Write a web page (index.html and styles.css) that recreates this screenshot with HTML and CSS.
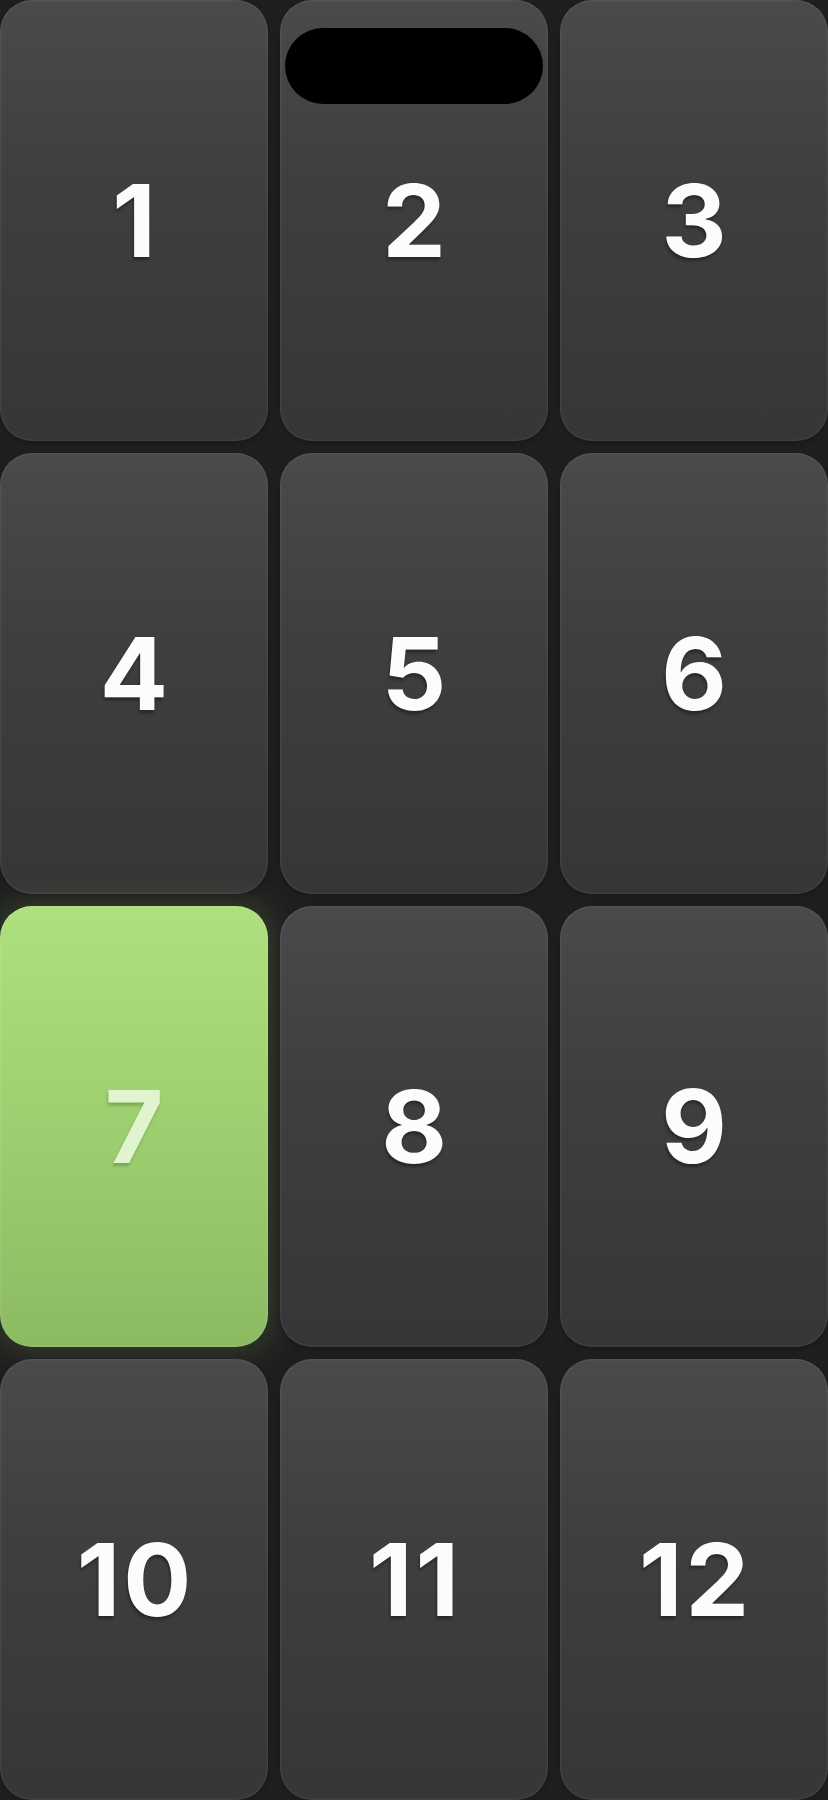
FILE: index.html
```html
<!DOCTYPE html>
<html lang="en">
<head>
  <meta charset="UTF-8" />
  <title>Number Grid</title>
  <link rel="stylesheet" href="styles.css">
</head>
<body>
  <!-- top island -->
  <div class="island"></div>

  <!-- 숫자 타일 -->
  <div class="grid">
    <div class="tile"><span>1</span></div>
    <div class="tile"><span>2</span></div>
    <div class="tile"><span>3</span></div>
    <div class="tile"><span>4</span></div>
    <div class="tile"><span>5</span></div>
    <div class="tile"><span>6</span></div>
    <div class="tile active"><span>7</span></div>
    <div class="tile"><span>8</span></div>
    <div class="tile"><span>9</span></div>
    <div class="tile"><span>10</span></div>
    <div class="tile"><span>11</span></div>
    <div class="tile"><span>12</span></div>
  </div>
</body>
</html>
```

FILE: styles.css
```css
html, body {
  margin: 0;
  padding: 0;
}

body {
  background-color: #1f1e21;
  width: 828px;
  height: 1800px;
  overflow: hidden;
  font-family: Inter, 'Liberation Sans', Arial, sans-serif;
  position: relative;
}

/* 타일 그리드 */
.grid {
  display: grid;
  grid-template-columns: repeat(3, 268px);
  grid-template-rows: repeat(4, 441px);
  gap: 12px;
}

.tile {
  display: flex;
  justify-content: center;
  align-items: center;
  border-radius: 32px;
  background: linear-gradient(to bottom, #4a494c 0%, #3f3e41 40%, #363538 100%);
  box-shadow: inset 0 0 0 1.5px rgba(255,255,255,0.05), 0 2px 6px rgba(0,0,0,0.25);
}

.tile span {
  color: #fcfcfc;
  font-size: 101px;
  font-weight: 700;
  letter-spacing: 3px;
  padding-left: 3px; /* 글자 간격 보정 */
  line-height: 1;
  text-shadow: -1px 3px 3px rgba(0,0,0,0.35);
}

/* 선택된 타일 */
.tile.active {
  background: linear-gradient(to bottom, #afe07f 0%, #9fd171 45%, #8cba62 100%);
  box-shadow: inset 0 0 0 1.5px rgba(255,255,255,0.08), 0 0 30px 8px rgba(120,170,70,0.22);
}

.tile.active span {
  color: #dff4cf;
  text-shadow: -1px 3px 3px rgba(60,90,30,0.35);
}

/* 상단 검은 알약 */
.island {
  position: absolute;
  top: 28px;
  left: 285px;
  width: 258px;
  height: 76px;
  border-radius: 38px;
  background-color: #000;
  z-index: 10;
}
```
